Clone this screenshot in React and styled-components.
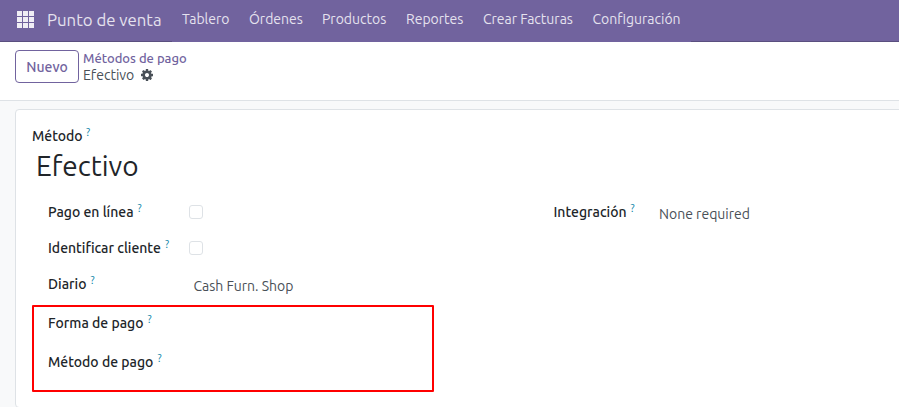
import React from "react";
import styled, { createGlobalStyle } from "styled-components";

const GlobalStyle = createGlobalStyle`
  * { box-sizing: border-box; }
  body {
    margin: 0;
    overflow: hidden;
    background: #f8f9fa;
    font-family: Ubuntu, "Noto Sans", "Open Sans", sans-serif;
    font-size: 14px;
    color: #212529;
  }
`;

const Page = styled.div`
  height: 407px;
  display: flex;
  flex-direction: column;
  overflow: hidden;
`;

const Navbar = styled.nav`
  height: 42px;
  flex: none;
  display: flex;
  background: #71639e;
  color: #e5e2ee;
`;

const Brand = styled.div`
  width: 172px;
  display: flex;
  align-items: flex-start;
  padding: 11px 0 0 17px;
  border-bottom: 1px solid #5a4f7f;
`;

const BrandName = styled.span`
  margin: -3px 0 0 12px;
  font-size: 16.8px;
  line-height: 24px;
  white-space: nowrap;
`;

const MenuItem = styled.a`
  width: ${(p) => p.$width}px;
  padding-left: 10px;
  line-height: 38px;
  white-space: nowrap;
`;

const NavRest = styled.div`
  flex: 1;
  border-bottom: 1px solid #5a4f7f;
`;

const ControlPanel = styled.header`
  height: 59px;
  flex: none;
  display: flex;
  padding: 8px 0 0 15px;
  background: #fff;
  border-bottom: 1px solid #dee2e6;
`;

const NewButton = styled.button`
  width: 64px;
  height: 33px;
  padding: 1px 0 0;
  border: 1px solid #71639e;
  border-radius: 4px;
  background: #fff;
  color: #71639e;
  font: 500 14px/31px Ubuntu, "Noto Sans", sans-serif;
`;

const Breadcrumb = styled.div`
  margin: -1px 0 0 4px;
`;

const Crumb = styled.div`
  display: flex;
  align-items: center;
  height: 17px;
  font-size: ${(p) => (p.$link ? 13 : 14)}px;
  font-weight: ${(p) => (p.$link ? 500 : 400)};
  color: ${(p) => (p.$link ? "#71639e" : "#495057")};
  white-space: nowrap;
`;

const CrumbText = styled.span`
  width: 58px;
`;

const Sheet = styled.main`
  height: 299px;
  flex: none;
  margin: 8px -10px 0 15px;
  padding: 16px 0 0 16px;
  background: #fff;
  border: 1px solid #dee2e6;
  border-radius: 4px;
`;

const Label = styled.label`
  display: flex;
  width: ${(p) => p.$width || 141}px;
  height: 20px;
  font-weight: 500;
  line-height: 20px;
  white-space: nowrap;
`;

const LabelText = styled.span`
  width: ${(p) => p.$width}px;
`;

const Help = styled.sup`
  font-size: 10.5px;
  font-weight: 400;
  line-height: 12px;
  color: #0180a5;
`;

const Title = styled.h1`
  margin: 0 0 0 4px;
  height: 40px;
  font-size: 28px;
  font-weight: 400;
  line-height: 40px;
`;

const Columns = styled.div`
  display: grid;
  grid-template-columns: 505.5px 1fr;
  margin: 16px 0 0 16px;
`;

const Row = styled.div`
  display: flex;
  height: 36px;
`;

const Checkbox = styled.span`
  width: 14px;
  height: 14px;
  margin-top: 3px;
  border: 1px solid #dee2e6;
  border-radius: 3px;
`;

const Value = styled.span`
  margin-left: ${(p) => p.$indent}px;
  padding-top: 2px;
  line-height: 20px;
  color: #495057;
  white-space: nowrap;
`;

const Highlight = styled.section`
  width: 402px;
  height: 87px;
  margin-top: -5px;
  padding: 6px 0 0 14px;
  border: 2px solid #ff0000;
  border-radius: 1px;
`;

const HighlightRow = styled(Row)`
  height: 39px;
`;

const menu = [
  ["Tablero", 67],
  ["Órdenes", 73],
  ["Productos", 84],
  ["Reportes", 77],
  ["Crear Facturas", 109.5],
  ["Configuración", 108.5],
];

function AppsIcon() {
  return (
    <svg width="18" height="17" viewBox="0 0 18 17" fill="#f0eef5" shapeRendering="crispEdges">
      {[0, 6, 12].map((y) =>
        [0, 6, 12].map((x) => <rect key={`${x}-${y}`} x={x} y={y} width="5" height="5" />)
      )}
    </svg>
  );
}

function GearIcon() {
  return (
    <svg width="12" height="12" viewBox="0 0 1536 1536" fill="#495057">
      <path d="M1024 768q0-106-75-181t-181-75-181 75-75 181 75 181 181 75 181-75 75-181zm512-109v222q0 12-8 23t-20 13l-185 28q-19 54-39 91 35 50 107 138 10 12 10 25t-9 23q-27 37-99 108t-94 71q-12 0-26-9l-138-108q-44 23-91 38-16 136-29 186-7 28-36 28H657q-14 0-24.500-8.500T621 1506l-28-184q-49-16-90-37l-141 107q-10 9-25 9-14 0-25-11-126-114-165-168-7-10-7-23 0-12 8-23 15-21 51-66.500t54-70.500q-27-50-41-99L29 913q-13-2-21-12.500T0 877V655q0-12 8-23t19-13l186-28q14-46 39-92-40-57-107-138-10-12-10-24 0-10 9-23 26-36 98.500-107.500T337 135q13 0 26 10l138 107q44-23 91-38 16-136 29-186 7-28 36-28h222q14 0 24.500 8.500T915 30l28 184q49 16 90 37l142-107q9-9 24-9 13 0 25 10 129 119 165 170 7 8 7 22 0 12-8 23-15 21-51 66.500t-54 70.500q26 50 41 98l183 28q13 2 21 12.500t8 23.500z" />
    </svg>
  );
}

function FieldLabel({ text, textWidth, width }) {
  return (
    <Label $width={width}>
      <LabelText $width={textWidth}>{text}</LabelText>
      <Help>?</Help>
    </Label>
  );
}

export default function App() {
  return (
    <Page>
      <GlobalStyle />
      <Navbar>
        <Brand>
          <AppsIcon />
          <BrandName>Punto de venta</BrandName>
        </Brand>
        {menu.map(([name, width]) => (
          <MenuItem key={name} $width={width}>{name}</MenuItem>
        ))}
        <NavRest />
      </Navbar>
      <ControlPanel>
        <NewButton>Nuevo</NewButton>
        <Breadcrumb>
          <Crumb $link>Métodos de pago</Crumb>
          <Crumb>
            <CrumbText>Efectivo</CrumbText>
            <GearIcon />
          </Crumb>
        </Breadcrumb>
      </ControlPanel>
      <Sheet>
        <FieldLabel text="Método" textWidth={54} />
        <Title>Efectivo</Title>
        <Columns>
          <div>
            <Row>
              <FieldLabel text="Pago en línea" textWidth={89.5} />
              <Checkbox />
            </Row>
            <Row>
              <FieldLabel text="Identificar cliente" textWidth={117} />
              <Checkbox />
            </Row>
            <Row>
              <FieldLabel text="Diario" textWidth={42.5} />
              <Value $indent={4.5}>Cash Furn. Shop</Value>
            </Row>
          </div>
          <Row>
            <FieldLabel text="Integración" textWidth={77} width={105} />
            <Value $indent={0.5}>None required</Value>
          </Row>
        </Columns>
        <Highlight>
          <HighlightRow>
            <FieldLabel text="Forma de pago" textWidth={99.5} />
          </HighlightRow>
          <HighlightRow>
            <FieldLabel text="Método de pago" textWidth={109.5} />
          </HighlightRow>
        </Highlight>
      </Sheet>
    </Page>
  );
}
